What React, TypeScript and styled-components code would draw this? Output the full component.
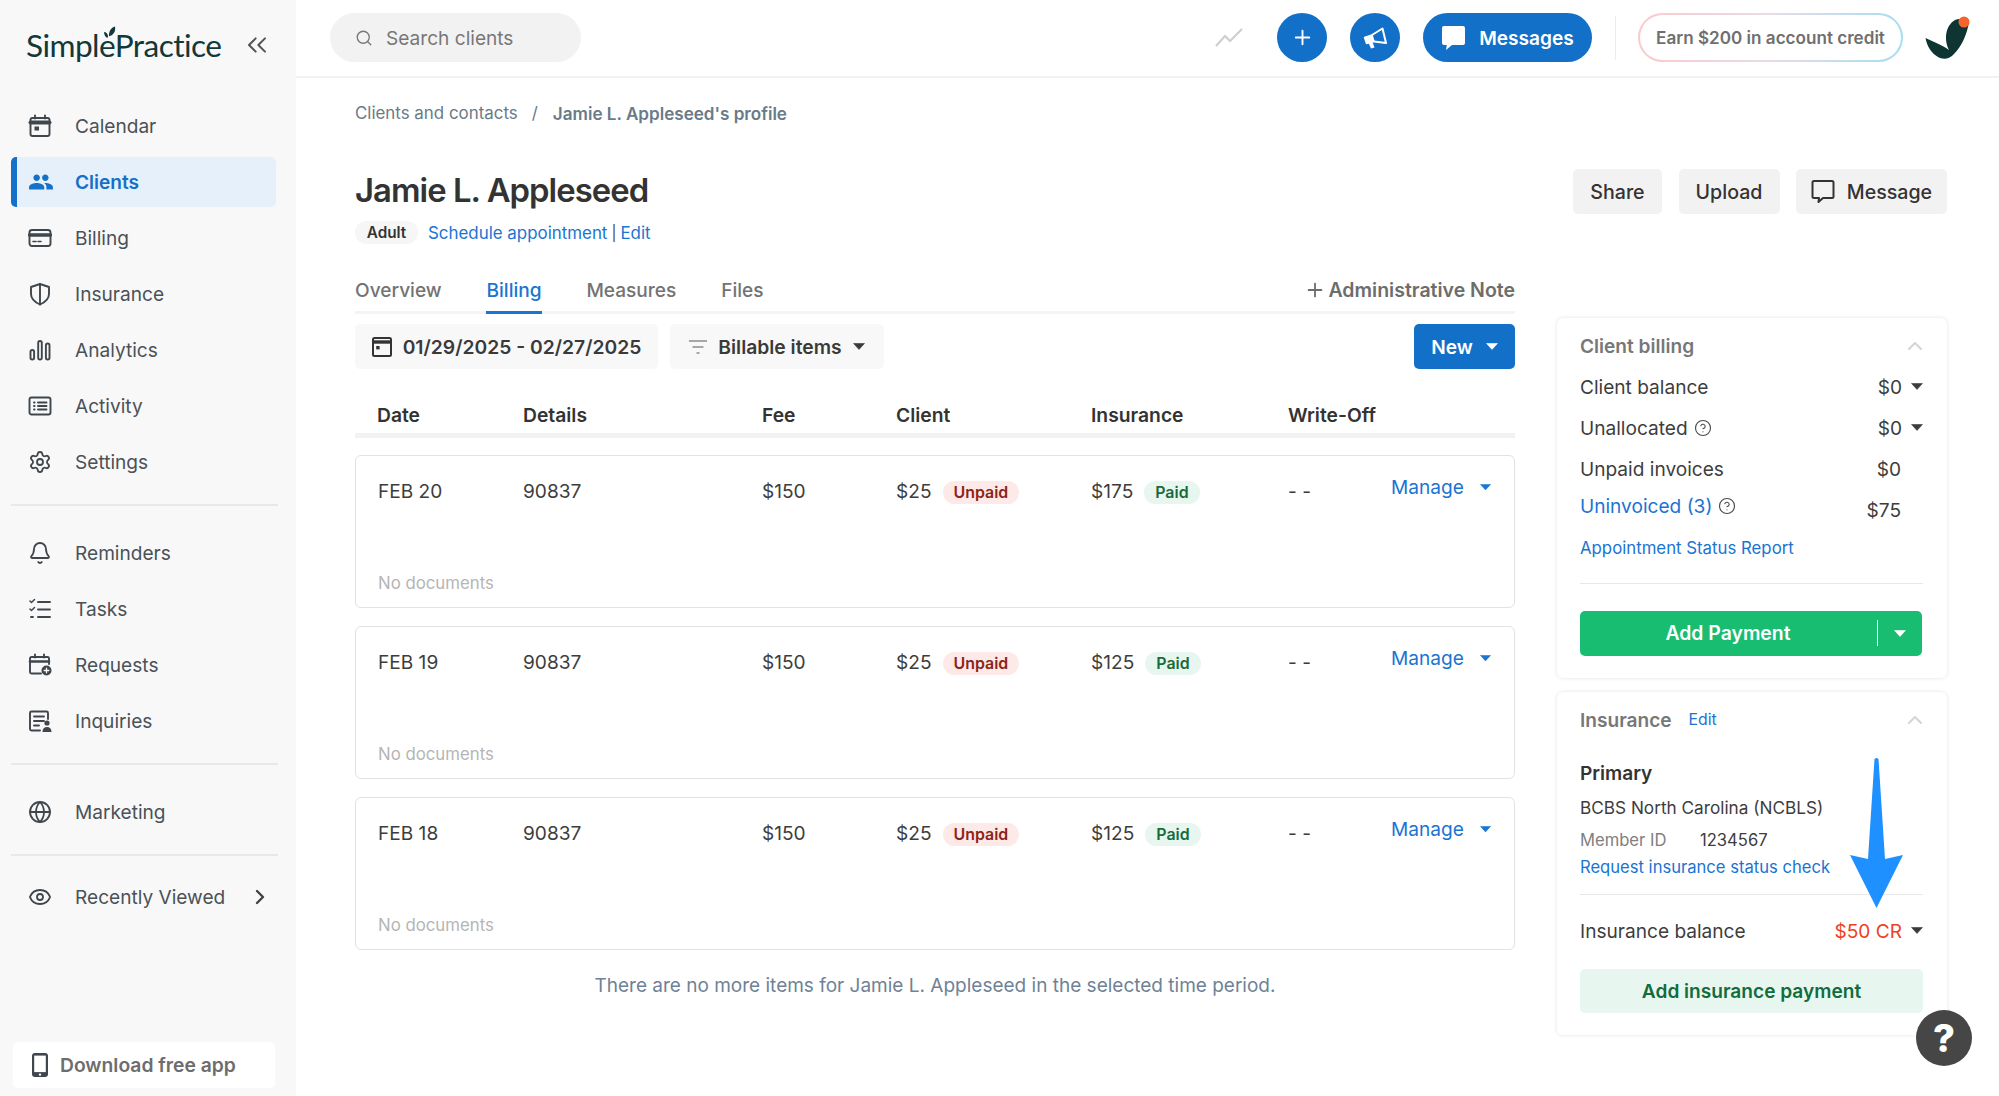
import React from "react";
import styled, { createGlobalStyle } from "styled-components";
import { ChevronRight, ChevronUp, ChevronsLeft, Globe, Eye, Search, Settings, Bell, Plus, HelpCircle } from "lucide-react";
import { MdPeople } from "react-icons/md";

const Global = createGlobalStyle`
  html, body { margin: 0; padding: 0; background: #fff; }
  body { font-family: Inter, "Liberation Sans", sans-serif; color: #3a3a3a; -webkit-font-smoothing: antialiased; }
  * { box-sizing: border-box; }
`;

const Page = styled.div`
  display: grid; grid-template-columns: 296px 1fr; width: 1999px; height: 1096px; overflow: hidden; position: relative;
`;
const Sidebar = styled.aside`
  background: #f8f8f8; display: flex; flex-direction: column; padding: 0 20px 0 11px; height: 100%;
`;
const LogoRow = styled.div`
  display: flex; align-items: center; justify-content: space-between; height: 90px; padding: 0 3px 0 15px; margin-bottom: 11px; color: #4f5559;
`;
const Logo = styled.div`
  position: relative; font-family: "Lato", sans-serif; font-size: 31.6px; letter-spacing: -0.55px; color: #12383a; line-height: 40px;
`;
const LogoLeaf = styled.svg`
  position: absolute; left: 77px; top: 1px;
`;
const NavItem = styled.div<{ $active?: boolean }>`
  display: flex; align-items: center; height: 50px; margin-bottom: 6px; gap: ${(p) => (p.$active ? "21px" : "23px")}; padding-left: ${(p) => (p.$active ? "11px" : "17px")};
  font-size: 19.1px; color: ${(p) => (p.$active ? "#1470c8" : "#4a5157")}; font-weight: ${(p) => (p.$active ? 600 : 400)};
  background: ${(p) => (p.$active ? "#e6f0fa" : "transparent")}; white-space: nowrap;
  border-left: ${(p) => (p.$active ? "6px solid #1470c8" : "none")}; border-radius: 5px;
  svg { flex: none; }
`;
const NavLabel = styled.span`flex: 1;`;
const NavChevron = styled.span`display: flex; color: #3d4348; padding-right: 6px;`;
const Divider = styled.hr<{ $after: number }>`
  border: 0; height: 2px; background: #e8e8e8; margin: 11px -2px ${(p) => p.$after}px 0;
`;
const Download = styled.div`
  margin-top: auto; margin-bottom: 8px; margin-left: 2px; margin-right: 1px; height: 46px; background: #fff; border-radius: 5px;
  display: flex; align-items: center; gap: 11px; padding-left: 18px; font-size: 19.3px; font-weight: 600; color: #6d6d6d; line-height: 44px;
`;

const Main = styled.main`display: flex; flex-direction: column; min-width: 0;`;
const TopBar = styled.header`
  height: 78px; border-bottom: 2px solid #f2f2f2; display: flex; align-items: center; padding: 0 29px 1px 34px; gap: 23px; flex: none;
`;
const SearchBox = styled.div`
  width: 251px; height: 49px; border-radius: 25px; background: #f2f2f2; display: flex; align-items: center; gap: 13px; padding-left: 25px;
  font-size: 19.1px; color: #777; margin-right: auto; svg { color: #777; }
`;
const TrendIcon = styled.svg`margin-right: 11px;`;
const RoundButton = styled.div`
  width: 50px; height: 49px; border-radius: 50%; background: #1270c8; color: #fff; display: flex; align-items: center; justify-content: center;
`;
const MessagesButton = styled.div`
  width: 169px; height: 49px; border-radius: 25px; background: #1270c8; color: #fff; display: flex; align-items: center; justify-content: center; gap: 13px;
  font-size: 19.1px; font-weight: 600;
`;
const BarDivider = styled.div`width: 1px; height: 44px; background: #ececec;`;
const EarnButton = styled.div`
  width: 265px; height: 49px; margin-left: -1px; border-radius: 25px; border: 2px solid transparent; display: flex; align-items: center; justify-content: center;
  background: linear-gradient(#fff, #fff) padding-box, linear-gradient(90deg, #fbc9cd, #e8dbe6 50%, #a3dff2) border-box;
  font-size: 17.1px; font-weight: 600; color: #6f6f6f; white-space: nowrap;
`;
const Avatar = styled.svg`flex: none; margin-left: -1px;`;

const Content = styled.div`padding: 0 52px 0 59px; display: flex; flex-direction: column;`;
const Crumbs = styled.div`
  height: 24px; margin-top: 23px; display: flex; align-items: center; font-size: 16.9px; color: #6a7a88;
`;
const CrumbSep = styled.span`margin: 0 15px 0 14px;`;
const CrumbCurrent = styled.span`font-size: 17.1px; font-weight: 600;`;
const TitleRow = styled.div`
  margin-top: 43px; display: flex; justify-content: space-between; align-items: flex-start; height: 76px;
`;
const TitleBlock = styled.div`display: flex; flex-direction: column;`;
const Title = styled.h1`
  margin: 0; font-size: 32.8px; font-weight: 600; line-height: 45px; color: #333; letter-spacing: -0.95px;
`;
const TitleMeta = styled.div`
  margin-top: 8px; display: flex; align-items: center; font-size: 16.9px; color: #444;
`;
const AgeTag = styled.span`
  width: 63px; height: 23px; border-radius: 12px; background: #f6f6f6; font-size: 15.3px; font-weight: 600; color: #333;
  display: flex; align-items: center; justify-content: center; margin-right: 10px;
`;
const Link = styled.a`color: #1a74d2; text-decoration: none;`;
const MetaSep = styled.span`margin: 0 4px; font-size: 15px;`;
const Actions = styled.div`display: flex; gap: 16.5px; margin-top: 1px;`;
const GreyButton = styled.div<{ $w: number }>`
  width: ${(p) => p.$w}px; height: 45px; background: #f2f2f2; border-radius: 5px; display: flex; align-items: center; justify-content: center; gap: 12px;
  font-size: 19.6px; font-weight: 500; color: #333;
`;
const Columns = styled.div`
  margin-top: 24px; display: grid; grid-template-columns: 1160px 390px; column-gap: 42px; align-items: start;
`;
const LeftCol = styled.section`display: flex; flex-direction: column;`;
const TabBar = styled.div`
  height: 46px; border-bottom: 3px solid #f4f4f4; display: flex; gap: 44.8px; align-items: stretch;
`;
const Tab = styled.div<{ $active?: boolean }>`
  font-size: 19.1px; font-weight: 500; line-height: 44px; height: 46px; color: ${(p) => (p.$active ? "#1a74d2" : "#737373")};
  border-bottom: 3px solid ${(p) => (p.$active ? "#1a74d2" : "transparent")};
`;
const AdminNote = styled.div`
  margin-left: auto; display: flex; align-items: center; gap: 2px; font-size: 19.5px; font-weight: 600; color: #6d6d6d; height: 43px;
`;
const Toolbar = styled.div`margin-top: 10px; display: flex; gap: 12px; align-items: center;`;
const FilterButton = styled.div<{ $w: number }>`
  width: ${(p) => p.$w}px; height: 45px; background: #f8f8f8; border-radius: 5px; display: flex; align-items: center; justify-content: center; gap: 11px;
  font-size: 19.3px; font-weight: 600; color: #3a3a3a;
`;
const NewButton = styled.div`
  margin-left: auto; width: 101px; height: 45px; background: #1270c8; border-radius: 5px; color: #fff; font-size: 19.1px; font-weight: 600;
  display: flex; align-items: center; justify-content: center; gap: 13px;
`;
const cols = "146px 239px 134px 195px 197px 103px 1fr";
const TableHead = styled.div`
  margin-top: 28px; height: 41px; border-bottom: 5px solid #f2f2f2; display: grid; grid-template-columns: ${cols}; padding-left: 22px; align-items: center;
  font-size: 19.3px; font-weight: 600; color: #333;
`;
const Cards = styled.div`margin-top: 17px; display: flex; flex-direction: column; gap: 18px;`;
const BillCard = styled.article`
  height: 153px; border: 1px solid #e2e2e2; border-radius: 6px; padding: 20px 21px 14px; display: flex; flex-direction: column; justify-content: space-between;
`;
const BillRow = styled.div`
  display: grid; grid-template-columns: ${cols}; height: 30px; align-items: center; font-size: 19.1px; color: #3d3d3d;
`;
const DateCell = styled.span`padding-left: 1px;`;
const AmountCell = styled.div`display: flex; align-items: center; gap: 11px;`;
const Status = styled.span<{ $paid?: boolean }>`
  height: 23px; border-radius: 12px; padding: 0 11px; margin-top: 2px; display: flex; align-items: center; font-size: 15.9px; font-weight: 600;
  background: ${(p) => (p.$paid ? "#e7f7ef" : "#fde9e7")}; color: ${(p) => (p.$paid ? "#176b3c" : "#8c2418")};
`;
const ManageCell = styled.div`
  align-self: start; display: flex; align-items: center; gap: 16px; color: #1a74d2; line-height: 22px; white-space: nowrap;
`;
const NoDocs = styled.div`font-size: 16.8px; color: #b5b5b5; line-height: 20px; padding-left: 1px;`;
const EndNote = styled.div`text-align: center; margin-top: 24px; font-size: 19px; color: #6f8296;`;
const RightCol = styled.aside`margin-top: 50px; display: flex; flex-direction: column; gap: 14px;`;
const Panel = styled.div`
  position: relative; border-radius: 6px; background: #fff; padding: 15px 24px 22px 23px; box-shadow: 0 0 4px rgba(0, 0, 0, 0.11);
`;
const PanelHead = styled.div`
  height: 26px; display: flex; align-items: center; font-size: 19.1px; font-weight: 600; color: #777;
`;
const PanelChevron = styled.span`margin-left: auto; margin-right: -4px; display: flex; color: #d4d4d4;`;
const SmallEdit = styled(Link)`font-size: 15.8px; font-weight: 400; margin-left: 17px;`;
const BillingRows = styled.div`margin-top: 7px;`;
const PanelRow = styled.div`
  display: flex; align-items: center; justify-content: space-between; height: 41.2px; font-size: 19.1px; color: #3d3d3d;
`;
const Label = styled.span<{ $raised?: boolean }>`
  display: flex; align-items: center; gap: 6px; margin-bottom: ${(p) => (p.$raised ? "8px" : "0")};
`;
const Value = styled.span<{ $caret?: boolean; $red?: boolean }>`
  display: flex; align-items: center; gap: 9px; padding-right: ${(p) => (p.$caret ? "0" : "22px")}; color: ${(p) => (p.$red ? "#f0401f" : "inherit")};
`;
const ReportLink = styled(Link)`
  display: flex; align-items: center; height: 35px; font-size: 16.8px;
`;
const PanelRule = styled.hr<{ $before: number; $after: number }>`
  border: 0; height: 1px; background: #e8e8e8; margin: ${(p) => p.$before}px 0 ${(p) => p.$after}px;
`;
const PayButton = styled.div`
  height: 45px; background: #18bd72; border-radius: 5px; color: #fff; display: flex; align-items: center; font-size: 19.4px; font-weight: 600; margin-right: 1px;
`;
const PayLabel = styled.span`flex: 1; text-align: center; padding-right: 1px;`;
const PaySplit = styled.span`width: 45px; height: 26px; border-left: 1.5px solid #fff; display: flex; align-items: center; justify-content: center;`;
const Primary = styled.div`margin-top: 28px; font-size: 19.1px; font-weight: 600; color: #333; line-height: 24px;`;
const Carrier = styled.div`margin-top: 11px; font-size: 17.2px; color: #3d3d3d; line-height: 24px;`;
const MemberRow = styled.div`margin-top: 8px; display: flex; font-size: 16.6px; line-height: 24px; color: #3d3d3d;`;
const MemberKey = styled.span`width: 120px; color: #808080;`;
const RequestLink = styled(Link)`display: block; margin-top: 3px; font-size: 16.6px; line-height: 24px;`;
const BalanceRow = styled(PanelRow)`height: 30px;`;
const InsurancePay = styled.div`
  margin-top: 23px; height: 44px; border-radius: 5px; background: #e7f7ef; color: #126c3d; display: flex; align-items: center; justify-content: center;
  font-size: 19.1px; font-weight: 600;
`;
const ArrowOverlay = styled.svg`position: absolute; left: 293px; top: 65px; pointer-events: none;`;
const HelpBubble = styled.div`
  position: absolute; right: 27px; bottom: 30px; width: 56px; height: 56px; border-radius: 50%; background: #464646; color: #fff;
  display: flex; align-items: center; justify-content: center; font-size: 38px; font-weight: 800;
`;

const Caret = ({ color = "currentColor", w = 12 }: { color?: string; w?: number }) => (
  <svg width={w} height={w * 0.58} viewBox="0 0 12 7"><path d="M0.5 0.5h11L6 6.5z" fill={color} stroke={color} strokeWidth="0.6" strokeLinejoin="round" /></svg>
);
const I = ({ children }: { children: React.ReactNode }) => (
  <svg width="24" height="24" viewBox="0 0 24 24" fill="none" stroke="#3f464c" strokeWidth="1.9" strokeLinecap="round" strokeLinejoin="round">{children}</svg>
);
const Help = () => <HelpCircle size={18} color="#4a4a4a" strokeWidth={1.5} />;

const icons: Record<string, React.ReactNode> = {
  Calendar: <I><rect x="2.5" y="4" width="19" height="18" rx="2" /><path d="M2.5 8.5h19" strokeWidth="4" /><path d="M7 1.5v3M17 1.5v3" /><rect x="6.5" y="12.5" width="4.5" height="4" fill="#3f464c" stroke="none" /></I>,
  Clients: <MdPeople size={26} color="#1470c8" />,
  Billing: <I><rect x="1.5" y="4" width="21" height="16" rx="2.5" /><path d="M1.5 9h21" strokeWidth="3.4" /><path d="M5 15.5h3M10 15.5h3" strokeWidth="1.6" /></I>,
  Insurance: <I><path d="M12 2 L21 5 V12 C21 17.5 16.5 20.5 12 22.5 C7.5 20.5 3 17.5 3 12 V5 Z" /><path d="M12 2 V22.5" /></I>,
  Analytics: <I><rect x="2.5" y="12" width="3.6" height="9.5" rx="1.8" /><rect x="10.2" y="3" width="3.6" height="18.5" rx="1.8" /><rect x="17.9" y="5.5" width="3.6" height="16" rx="1.8" /></I>,
  Activity: <I><rect x="1.5" y="3.5" width="21" height="17" rx="2" /><path d="M6 8.5h.6M6 12h.6M6 15.5h.6M10 8.5h8.5M10 12h8.5M10 15.5h8.5" /></I>,
  Settings: <Settings size={24} color="#3f464c" strokeWidth={1.8} />,
  Reminders: <Bell size={24} color="#3f464c" strokeWidth={1.8} />,
  Tasks: <I><path d="M2 4l1.5 1.5L6.5 2.5M2 12l1.5 1.5L6.5 10.5" strokeWidth="1.5" /><path d="M3 20h2M10 5h12M10 12.5h12M10 20h12" /></I>,
  Requests: <I><path d="M21 11V5.5a1.5 1.5 0 0 0-1.5-1.5h-16A1.5 1.5 0 0 0 2 5.5V19a1.5 1.5 0 0 0 1.5 1.5H13" /><path d="M2 8.5h19" strokeWidth="2.6" /><path d="M7 1.5v3M16 1.5v3" /><circle cx="18.5" cy="17.5" r="5" fill="#3f464c" stroke="none" /><path d="M18.5 15.2v4.6M16.2 17.5h4.6" stroke="#f8f8f8" strokeWidth="1.3" /></I>,
  Inquiries: <I><path d="M20 10V4a1.5 1.5 0 0 0-1.5-1.5h-15A1.5 1.5 0 0 0 2 4v16a1.5 1.5 0 0 0 1.5 1.5H12" /><path d="M6 7.5h10M6 12h10M6 16.5h5" /><circle cx="19" cy="14" r="2.6" fill="#3f464c" stroke="none" /><path d="M14.5 23c0-3.2 1.8-5 4.5-5s4.5 1.8 4.5 5z" fill="#3f464c" stroke="none" /></I>,
  Marketing: <Globe size={24} color="#3f464c" strokeWidth={1.8} />,
  "Recently Viewed": <Eye size={24} color="#3f464c" strokeWidth={1.8} />,
};

const NavGroup = ({ items, active }: { items: string[]; active?: string }) => (
  <>
    {items.map((n) => (
      <NavItem key={n} $active={n === active}>
        {icons[n]}
        <NavLabel>{n}</NavLabel>
        {n === "Recently Viewed" && <NavChevron><ChevronRight size={24} strokeWidth={2.4} /></NavChevron>}
      </NavItem>
    ))}
  </>
);

const rows = [
  { date: "FEB 20", ins: "$175" },
  { date: "FEB 19", ins: "$125" },
  { date: "FEB 18", ins: "$125" },
];

export default function App() {
  return (
    <Page>
      <Global />
      <Sidebar>
        <LogoRow>
          <Logo>
            SimplePractice
            <LogoLeaf width="13" height="13" viewBox="0 0 12 12"><path d="M5.5 9.5C5.5 4.5 7.5 1.5 11 0.5 12 4.5 10 8.5 5.5 9.5Z M4 11C2 10 1 8 1 5.5 3 5.5 4.5 7.5 4.7 9.5Z" fill="#12383a" /></LogoLeaf>
          </Logo>
          <ChevronsLeft size={32} strokeWidth={1.5} />
        </LogoRow>
        <NavGroup items={["Calendar", "Clients", "Billing", "Insurance", "Analytics", "Activity", "Settings"]} active="Clients" />
        <Divider $after={22} />
        <NavGroup items={["Reminders", "Tasks", "Requests", "Inquiries"]} />
        <Divider $after={22} />
        <NavGroup items={["Marketing"]} />
        <Divider $after={16} />
        <NavGroup items={["Recently Viewed"]} />
        <Download>
          <svg width="18" height="26" viewBox="0 0 18 26"><rect x="1" y="1" width="16" height="24" rx="3" fill="#3f464c" /><rect x="3.2" y="3.6" width="11.6" height="16.5" fill="#fff" /><circle cx="9" cy="22.6" r="1.2" fill="#fff" /></svg>
          Download free app
        </Download>
      </Sidebar>

      <Main>
        <TopBar>
          <SearchBox><Search size={18} strokeWidth={1.8} />Search clients</SearchBox>
          <TrendIcon width="28" height="20" viewBox="0 0 28 20" fill="none" stroke="#cfcfcf" strokeWidth="2.2" strokeLinejoin="round">
            <path d="M1 18 L10 8 L15 13 L27 1" />
          </TrendIcon>
          <RoundButton><Plus size={23} strokeWidth={2} /></RoundButton>
          <RoundButton>
            <svg width="24" height="24" viewBox="0 0 24 24" fill="none" stroke="#fff" strokeWidth="2" strokeLinejoin="round">
              <path d="M1.5 11.5 L9 9 L11 15.5 L3.5 17.5 Z" fill="#fff" stroke="#fff" strokeWidth="1.4" />
              <path d="M9 9 L19.5 2.5 L23 17 L11 15.5" />
              <path d="M5.5 17 L8 22.5 L11.5 21.5 L9.5 16 Z" fill="#fff" stroke="none" />
            </svg>
          </RoundButton>
          <MessagesButton>
            <svg width="25" height="26" viewBox="0 0 25 26"><path d="M3 1h19a2 2 0 0 1 2 2v15a2 2 0 0 1-2 2H11l-6 5 .8-5H3a2 2 0 0 1-2-2V3a2 2 0 0 1 2-2z" fill="#fff" /></svg>
            Messages
          </MessagesButton>
          <BarDivider />
          <EarnButton>Earn $200 in account credit</EarnButton>
          <Avatar width="45" height="44" viewBox="0 0 45 44">
            <path d="M0.5 22C9 26 19 30 24 34C19 24 20 10 30 4C34 2 40 3 44 6C42 18 37 30 29 38C25 43 18 44 13 41C6 37 2 30 0.5 22Z" fill="#0f3533" />
            <circle cx="39" cy="6" r="5.5" fill="#f4652d" />
          </Avatar>
        </TopBar>

        <Content>
          <Crumbs>Clients and contacts<CrumbSep>/</CrumbSep><CrumbCurrent>Jamie L. Appleseed's profile</CrumbCurrent></Crumbs>
          <TitleRow>
            <TitleBlock>
              <Title>Jamie L. Appleseed</Title>
              <TitleMeta>
                <AgeTag>Adult</AgeTag>
                <Link>Schedule appointment</Link><MetaSep>|</MetaSep><Link>Edit</Link>
              </TitleMeta>
            </TitleBlock>
            <Actions>
              <GreyButton $w={89}>Share</GreyButton>
              <GreyButton $w={101}>Upload</GreyButton>
              <GreyButton $w={151}>
                <svg width="24" height="25" viewBox="0 0 24 25" fill="none" stroke="#333" strokeWidth="2" strokeLinejoin="round"><path d="M3 2h18a1.5 1.5 0 0 1 1.5 1.5v14a1.5 1.5 0 0 1-1.5 1.5h-9l-4.5 4 .5-4H3a1.5 1.5 0 0 1-1.5-1.5v-14A1.5 1.5 0 0 1 3 2z" /></svg>
                Message
              </GreyButton>
            </Actions>
          </TitleRow>

          <Columns>
            <LeftCol>
              <TabBar>
                <Tab>Overview</Tab>
                <Tab $active>Billing</Tab>
                <Tab>Measures</Tab>
                <Tab>Files</Tab>
                <AdminNote><Plus size={22} strokeWidth={2} />Administrative Note</AdminNote>
              </TabBar>
              <Toolbar>
                <FilterButton $w={303}>
                  <svg width="20" height="22" viewBox="0 0 20 22" fill="none" stroke="#333" strokeWidth="2"><rect x="1" y="2" width="18" height="18" rx="1.5" /><path d="M1 6h18" strokeWidth="3.4" /><rect x="4.2" y="10" width="3.4" height="3.4" fill="#333" stroke="none" /></svg>
                  01/29/2025 - 02/27/2025
                </FilterButton>
                <FilterButton $w={214}>
                  <svg width="18" height="16" viewBox="0 0 18 16" fill="none" stroke="#8c8c8c" strokeWidth="1.7"><path d="M0 2h18M3.5 8h11M7.5 14h3" /></svg>
                  Billable items
                  <Caret color="#3a3a3a" />
                </FilterButton>
                <NewButton>New<Caret color="#fff" /></NewButton>
              </Toolbar>
              <TableHead>
                <span>Date</span><span>Details</span><span>Fee</span><span>Client</span><span>Insurance</span><span>Write-Off</span>
              </TableHead>
              <Cards>
                {rows.map((r) => (
                  <BillCard key={r.date}>
                    <BillRow>
                      <DateCell>{r.date}</DateCell>
                      <span>90837</span>
                      <span>$150</span>
                      <AmountCell>$25<Status>Unpaid</Status></AmountCell>
                      <AmountCell>{r.ins}<Status $paid>Paid</Status></AmountCell>
                      <span>- -</span>
                      <ManageCell>Manage<Caret color="#1a74d2" w={11} /></ManageCell>
                    </BillRow>
                    <NoDocs>No documents</NoDocs>
                  </BillCard>
                ))}
              </Cards>
              <EndNote>There are no more items for Jamie L. Appleseed in the selected time period.</EndNote>
            </LeftCol>

            <RightCol>
              <Panel>
                <PanelHead>Client billing<PanelChevron><ChevronUp size={24} strokeWidth={2} /></PanelChevron></PanelHead>
                <BillingRows>
                  <PanelRow><Label>Client balance</Label><Value $caret>$0<Caret /></Value></PanelRow>
                  <PanelRow><Label>Unallocated<Help /></Label><Value $caret>$0<Caret /></Value></PanelRow>
                  <PanelRow><Label>Unpaid invoices</Label><Value>$0</Value></PanelRow>
                  <PanelRow><Label $raised><Link>Uninvoiced (3)</Link><Help /></Label><Value>$75</Value></PanelRow>
                </BillingRows>
                <ReportLink>Appointment Status Report</ReportLink>
                <PanelRule $before={17} $after={27} />
                <PayButton>
                  <PayLabel>Add Payment</PayLabel>
                  <PaySplit><Caret color="#fff" /></PaySplit>
                </PayButton>
              </Panel>
              <Panel>
                <PanelHead>Insurance<SmallEdit>Edit</SmallEdit><PanelChevron><ChevronUp size={24} strokeWidth={2} /></PanelChevron></PanelHead>
                <Primary>Primary</Primary>
                <Carrier>BCBS North Carolina (NCBLS)</Carrier>
                <MemberRow><MemberKey>Member ID</MemberKey>1234567</MemberRow>
                <RequestLink>Request insurance status check</RequestLink>
                <PanelRule $before={15} $after={21} />
                <BalanceRow><Label>Insurance balance</Label><Value $caret $red>$50 CR<Caret color="#3a3a3a" /></Value></BalanceRow>
                <InsurancePay>Add insurance payment</InsurancePay>
                <ArrowOverlay width="53" height="152" viewBox="0 0 53 152">
                  <path d="M24.5 2 Q26.5 0 28.5 2 L35 102 L53 98 L26.5 151 L0 98 L18 102 Z" fill="#1e90ff" />
                </ArrowOverlay>
              </Panel>
            </RightCol>
          </Columns>
        </Content>
      </Main>
      <HelpBubble>?</HelpBubble>
    </Page>
  );
}
